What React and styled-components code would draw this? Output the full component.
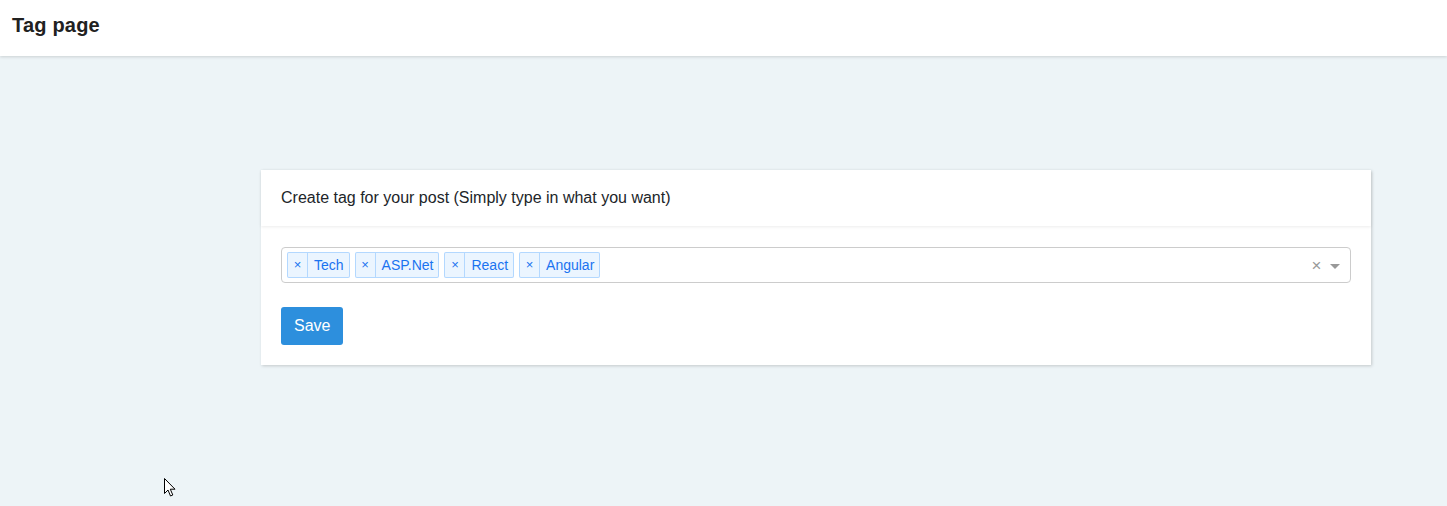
import React from "react";
import styled, { createGlobalStyle } from "styled-components";

const Global = createGlobalStyle`
  html, body { margin: 0; padding: 0; }
  body {
    background: #edf4f7;
    font-family: "Liberation Sans", Arial, sans-serif;
    color: #212529;
    min-height: 506px;
  }
`;

const Page = styled.div`
  min-height: 506px;
  background: #edf4f7;
  position: relative;
`;

const TopBar = styled.header`
  height: 56px;
  background: #fff;
  box-shadow: 0 1px 3px rgba(0, 0, 0, 0.15);
  display: flex;
  align-items: center;
  padding: 0 12px;
  box-sizing: border-box;
`;

const Title = styled.h1`
  margin: 0;
  font-size: 20px;
  font-weight: bold;
  letter-spacing: 0.2px;
  color: #212121;
  position: relative;
  top: -3px;
`;

const Main = styled.main`
  padding: 114px 0 0 261px;
`;

const Card = styled.section`
  width: 1110px;
  background: #fff;
  box-shadow: 1px 1px 3px rgba(0, 0, 0, 0.18);
`;

const CardHeader = styled.div`
  height: 56px;
  box-sizing: border-box;
  padding: 0 20px;
  display: flex;
  align-items: center;
  font-size: 16px;
  color: #212529;
  box-shadow: 0 1px 3px rgba(0, 0, 0, 0.08);
  position: relative;
`;

const CardBody = styled.div`
  padding: 21px 20px 20px;
`;

const Control = styled.div`
  height: 36px;
  box-sizing: border-box;
  border: 1px solid #ccc;
  border-radius: 4px;
  display: flex;
  align-items: center;
  padding: 0 0 0 5px;
`;

const Values = styled.div`
  flex: 1;
  display: flex;
  align-items: center;
  gap: 5px;
`;

const Tag = styled.div`
  display: flex;
  align-items: stretch;
  height: 26px;
  box-sizing: border-box;
  background: #ebf5ff;
  border: 1px solid rgba(0, 126, 255, 0.24);
  border-radius: 2px;
  color: #1a73f0;
  font-size: 14px;
`;

const TagIcon = styled.span`
  width: 20px;
  display: flex;
  align-items: center;
  justify-content: center;
  border-right: 1px solid rgba(0, 126, 255, 0.24);
  font-size: 13px;
  padding-bottom: 1px;
  box-sizing: border-box;
`;

const TagLabel = styled.span`
  display: flex;
  align-items: center;
  padding: 0 5px 0 6px;
`;

const Clear = styled.span`
  color: #999;
  font-size: 17px;
  width: 17px;
  text-align: center;
  line-height: 1;
`;

const Arrow = styled.span`
  width: 25px;
  display: flex;
  justify-content: center;
  padding-right: 5px;
  box-sizing: border-box;
  &::before {
    content: "";
    border-color: #999 transparent transparent;
    border-style: solid;
    border-width: 5px 5px 2.5px;
    margin-top: 4px;
  }
`;

const SaveButton = styled.button`
  margin-top: 24px;
  height: 38px;
  padding: 0 13px;
  background: #2d8fdd;
  border: none;
  border-radius: 3px;
  color: #fff;
  font-family: "Liberation Sans", Arial, sans-serif;
  font-size: 16px;
  cursor: pointer;
  display: block;
`;

const Pointer = styled.svg`
  position: absolute;
  left: 164px;
  top: 478px;
  width: 13px;
  height: 20px;
  pointer-events: none;
`;

const tags = ["Tech", "ASP.Net", "React", "Angular"];

export default function App() {
  return (
    <Page>
      <Global />
      <TopBar>
        <Title>Tag page</Title>
      </TopBar>
      <Main>
        <Card>
          <CardHeader>Create tag for your post (Simply type in what you want)</CardHeader>
          <CardBody>
            <Control>
              <Values>
                {tags.map((t) => (
                  <Tag key={t}>
                    <TagIcon>×</TagIcon>
                    <TagLabel>{t}</TagLabel>
                  </Tag>
                ))}
              </Values>
              <Clear>×</Clear>
              <Arrow />
            </Control>
            <SaveButton>Save</SaveButton>
          </CardBody>
        </Card>
      </Main>
      <Pointer viewBox="0 0 13 20">
        <path
          d="M0.5 0.5 L0.5 15.5 L4 12 L6.5 18 L8.8 17 L6.3 11.2 L11 11.2 Z"
          fill="#fff"
          stroke="#000"
          strokeWidth="1"
          strokeLinejoin="miter"
        />
      </Pointer>
    </Page>
  );
}
